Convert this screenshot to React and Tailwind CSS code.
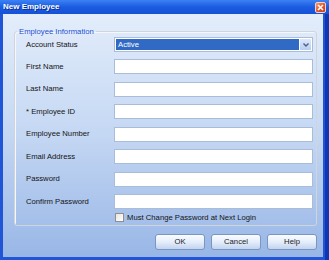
const fields = ['First Name', 'Last Name', '* Employee ID', 'Employee Number', 'Email Address', 'Password', 'Confirm Password']

function Row({ label, children }) {
  return (
    <div className="flex h-[15px] items-center">
      <span className="w-[88px] shrink-0 leading-none">{label}</span>
      {children}
    </div>
  )
}

function Btn({ children }) {
  return (
    <button className="flex h-[16px] w-[50px] items-center justify-center rounded-[3px] border border-[#7a95c0] bg-gradient-to-b from-[#fbfdff] via-[#e4edfa] to-[#c3d4ef] leading-none text-[#1b1b1b]">
      {children}
    </button>
  )
}

export default function App() {
  return (
    <div className="flex h-[260px] w-[329px] flex-col border-r-[4px] border-r-[#1236b2] bg-[#1f55d6] font-['Liberation_Sans',Arial,sans-serif] text-[7.7px] text-[#141414]">
      <div className="-mr-[4px] flex h-[14px] shrink-0 items-center justify-between bg-gradient-to-b from-[#3c82f4] via-[#1b5ce1] to-[#1651d6] pl-[3px] pr-[3px]">
        <span className="text-[8px] font-bold leading-none text-white [text-shadow:1px_1px_0_#0a2f8f]">New Employee</span>
        <div className="flex h-[11px] w-[11px] items-center justify-center rounded-[2px] border border-[#f4d2c6] bg-gradient-to-br from-[#f39a70] via-[#e2582e] to-[#c8391a]">
          <svg width="7" height="7" viewBox="0 0 7 7">
            <path d="M1 1L6 6M6 1L1 6" stroke="#fff" strokeWidth="1.6" />
          </svg>
        </div>
      </div>
      <div className="mb-[3px] ml-[3px] mr-[2px] flex flex-1 flex-col bg-gradient-to-b from-[#e3edfb] via-[#c4d7f3] to-[#98b6e6] pl-[11px] pr-[6px] pt-[12.5px]">
        <fieldset className="rounded-[3px] border border-[#cfd5d9] pb-[2px] shadow-[inset_1px_1px_0_#f4f7fb]">
          <legend className="ml-[2px] px-[2px] leading-[9px] text-[#1d4fd2]">Employee Information</legend>
          <div className="flex flex-col gap-[7.43px] pl-[11px] pr-[3px] pt-[1.5px]">
            <Row label="Account Status">
              <div className="flex h-[15px] flex-1 border border-[#a9bdd8] bg-white p-[1px]">
                <div className="flex flex-1 items-center bg-[#316ac5] pl-[2px] leading-none text-white">Active</div>
                <div className="ml-[1px] flex w-[11px] items-center justify-center bg-gradient-to-b from-[#dde8fb] to-[#b8cdf2]">
                  <svg width="6" height="4" viewBox="0 0 6 4">
                    <path d="M0.5 0.5L3 3L5.5 0.5" stroke="#4d6185" strokeWidth="1.4" fill="none" />
                  </svg>
                </div>
              </div>
            </Row>
            {fields.map((f) => (
              <Row key={f} label={f}>
                <div className="h-[15px] flex-1 border border-[#a9bdd8] bg-white" />
              </Row>
            ))}
          </div>
          <div className="mt-[4px] flex h-[10px] items-center pl-[100px]">
            <div className="h-[9px] w-[9px] border border-[#8d8f94] bg-gradient-to-br from-[#e9e6dc] to-[#ffffff]" />
            <span className="ml-[3px] leading-none">Must Change Password at Next Login</span>
          </div>
        </fieldset>
        <div className="mt-[8px] flex justify-end gap-[6px]">
          <Btn>OK</Btn>
          <Btn>Cancel</Btn>
          <Btn>Help</Btn>
        </div>
      </div>
    </div>
  )
}
